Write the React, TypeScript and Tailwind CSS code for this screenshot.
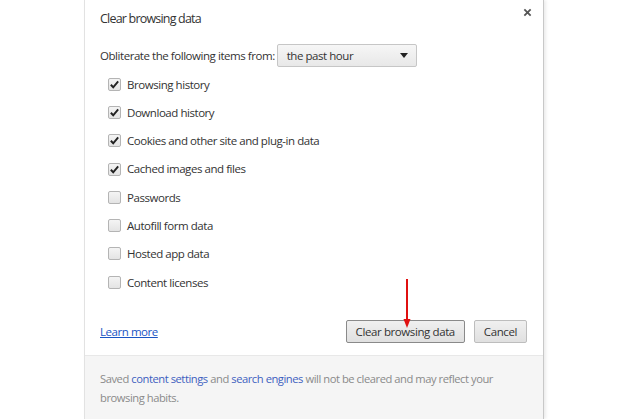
import React from 'react';

const ITEMS = [
  { label: 'Browsing history', checked: true },
  { label: 'Download history', checked: true },
  { label: 'Cookies and other site and plug-in data', checked: true },
  { label: 'Cached images and files', checked: true },
  { label: 'Passwords', checked: false },
  { label: 'Autofill form data', checked: false },
  { label: 'Hosted app data', checked: false },
  { label: 'Content licenses', checked: false },
];

function Checkbox({ checked }: { checked: boolean }) {
  return (
    <span className="relative flex h-[13px] w-[13px] items-center justify-center rounded-[2px] border border-[#b4b4b4] bg-gradient-to-b from-[#f4f4f4] to-[#e4e4e4]">
      {checked && (
        <svg viewBox="0 0 12 12" className="h-[11px] w-[11px]">
          <path d="M2 6.3 L4.6 9 L10 2.6" fill="none" stroke="#222" strokeWidth="2.1" />
        </svg>
      )}
    </span>
  );
}

function Button({ children, focused }: { children: React.ReactNode; focused?: boolean }) {
  return (
    <button
      className={
        focused
          ? 'h-[23px] rounded-[2px] border border-[#8a8a8a] bg-gradient-to-b from-[#f0f0f0] to-[#e0e0e0] px-[9px] text-[11.5px] tracking-[-0.4px] text-[#333]'
          : 'h-[23px] rounded-[2px] border border-[#bdbdbd] bg-gradient-to-b from-[#f0f0f0] to-[#e0e0e0] px-[9px] text-[11.5px] tracking-[-0.4px] text-[#333]'
      }
    >
      {children}
    </button>
  );
}

export default function App() {
  return (
    <div className="h-[419px] w-[630px] overflow-hidden bg-white font-['Open_Sans',sans-serif] text-[#333]">
      <div className="relative ml-[84px] flex h-[419px] w-[460px] flex-col border-l border-r border-l-[#e2e2e2] border-r-[#c8c8c8] bg-white shadow-[2px_0_3px_rgba(0,0,0,0.08)]">
        <button className="absolute right-[10px] top-[6px] flex h-[12px] w-[12px] items-center justify-center">
          <svg viewBox="0 0 10 10" className="h-[9px] w-[9px]">
            <path d="M1.5 1.5 L8.5 8.5 M8.5 1.5 L1.5 8.5" stroke="#555" strokeWidth="2" />
          </svg>
        </button>

        <div className="px-[15px] pt-[9px] text-[11.5px] tracking-[-0.45px]">
          <h1 className="text-[12.5px] leading-[20px] tracking-[-0.8px] text-[#333]">Clear browsing data</h1>

          <div className="mt-[15px] flex items-center">
            <span className="leading-[16px]">Obliterate the following items from:</span>
            <div className="ml-[2px] flex h-[23px] w-[140px] items-center justify-between rounded-[2px] border border-[#c6c6c6] bg-gradient-to-b from-[#f6f6f6] to-[#e8e8e8] pl-[9px] pr-[8px]">
              <span>the past hour</span>
              <svg viewBox="0 0 8 5" className="h-[5px] w-[8px]">
                <path d="M0 0 L8 0 L4 5 Z" fill="#222" />
              </svg>
            </div>
          </div>

          <ul className="mt-[3px] flex flex-col pl-[8px]">
            {ITEMS.map((item) => (
              <li key={item.label} className="flex h-[28.3px] items-center gap-[6px]">
                <Checkbox checked={item.checked} />
                <span>{item.label}</span>
              </li>
            ))}
          </ul>

          <div className="mt-[24px] flex items-center">
            <a className="text-[#1a55c4] underline" href="#">
              Learn more
            </a>
            <div className="ml-auto flex gap-[9px] pr-[1px]">
              <Button focused>Clear browsing data</Button>
              <Button>Cancel</Button>
            </div>
          </div>
        </div>

        <div className="mt-[12px] flex-1 border-t border-[#e8e8e8] bg-[#f5f5f5] px-[15px] pt-[13px] text-[11.2px] leading-[19px] tracking-[-0.45px] text-[#8a8a8a]">
          <p>
            Saved <span className="text-[#3d5fbf]">content settings</span> and{' '}
            <span className="text-[#3d5fbf]">search engines</span> will not be cleared and may reflect your
          </p>
          <p>browsing habits.</p>
        </div>

        <svg className="pointer-events-none absolute left-[316px] top-[279px]" width="12" height="50" viewBox="0 0 12 50">
          <path d="M6 0 L6 42" stroke="#e01010" strokeWidth="2" />
          <path d="M2.5 40 L9.5 40 L6 49 Z" fill="#e01010" />
        </svg>
      </div>
    </div>
  );
}
